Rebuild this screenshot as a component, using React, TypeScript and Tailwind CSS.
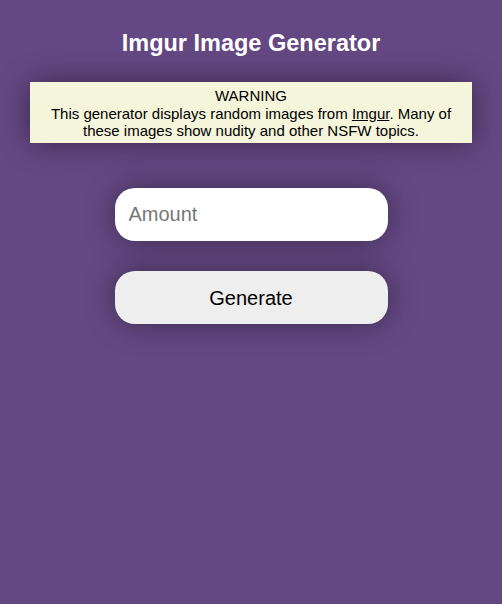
export default function App() {
  return (
    <div className="min-h-[604px] bg-[#644883] font-['Liberation_Sans',Arial,sans-serif] flex flex-col items-center">
      <h1 className="mt-[29px] text-[23.5px] leading-[28px] font-bold text-white">Imgur Image Generator</h1>
      <div className="mt-[25px] w-[442px] h-[61px] bg-[#f5f5dc] text-black text-[15px] leading-[17.5px] text-center pt-[5px] shadow-[0_0_30px_rgba(0,0,0,0.45)]">
        <div>WARNING</div>
        <div className="px-[16px]">
          This generator displays random images from <a className="underline">Imgur</a>. Many of these images show nudity and other NSFW topics.
        </div>
      </div>
      <input
        placeholder="Amount"
        className="mt-[45px] w-[273px] h-[53px] rounded-[20px] bg-white px-[14px] text-[20px] text-black placeholder:text-[#777] outline-none shadow-[0_0_30px_rgba(0,0,0,0.4)]"
      />
      <button className="mt-[30px] w-[273px] h-[53px] rounded-[20px] bg-[#eeeeee] text-[20px] text-black shadow-[0_0_30px_rgba(0,0,0,0.4)]">
        Generate
      </button>
    </div>
  )
}
